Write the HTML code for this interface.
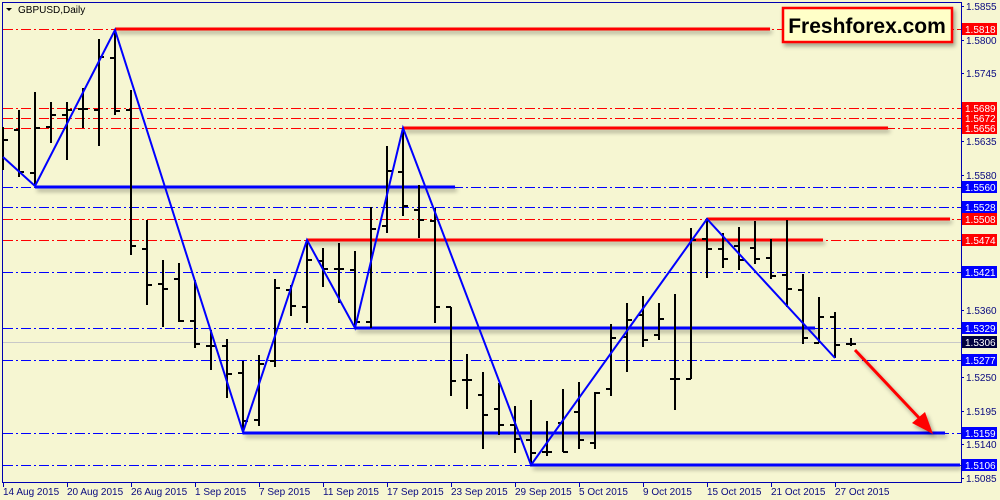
<!DOCTYPE html>
<html><head><meta charset="utf-8"><style>
html,body{margin:0;padding:0;background:#f6f6d2;}
svg{display:block;}
text{font-family:"Liberation Sans",sans-serif;font-size:10px;}
</style></head><body>
<svg width="1000" height="500" xmlns="http://www.w3.org/2000/svg">
<defs>
<filter id="sh" x="-5%" y="-50%" width="110%" height="300%"><feDropShadow dx="2" dy="3" stdDeviation="2" flood-color="#000" flood-opacity="0.35"/></filter>
</defs>
<rect width="1000" height="500" fill="#f6f6d2"/>
<path d="M2.5 2V482.5H961.5V2" fill="none" stroke="#0000b0" stroke-width="1"/>
<line x1="2" y1="2.5" x2="961" y2="2.5" stroke="#0000b0"/>
<line x1="3" y1="342.5" x2="961" y2="342.5" stroke="#c8c8c8"/>
<g stroke-width="1" stroke-dasharray="10,3,2,3" fill="none">
<g stroke="#ff0000">
<line x1="3" y1="29.5" x2="961" y2="29.5"/>
<line x1="3" y1="108.5" x2="961" y2="108.5"/>
<line x1="3" y1="118.5" x2="961" y2="118.5"/>
<line x1="3" y1="128.5" x2="961" y2="128.5"/>
<line x1="3" y1="219.5" x2="961" y2="219.5"/>
<line x1="3" y1="240.5" x2="961" y2="240.5"/>
</g>
<g stroke="#0000ff">
<line x1="3" y1="187.5" x2="961" y2="187.5"/>
<line x1="3" y1="207.5" x2="961" y2="207.5"/>
<line x1="3" y1="272.5" x2="961" y2="272.5"/>
<line x1="3" y1="328.5" x2="961" y2="328.5"/>
<line x1="3" y1="360.5" x2="961" y2="360.5"/>
<line x1="3" y1="433.5" x2="961" y2="433.5"/>
<line x1="3" y1="465.5" x2="961" y2="465.5"/>
</g>
</g>
<g stroke-width="3" filter="url(#sh)">
<line x1="115" y1="29" x2="770" y2="29" stroke="#ff0000"/>
<line x1="403" y1="128" x2="888" y2="128" stroke="#ff0000"/>
<line x1="707" y1="219" x2="950" y2="219" stroke="#ff0000"/>
<line x1="307" y1="240" x2="823" y2="240" stroke="#ff0000"/>
<line x1="35" y1="187" x2="455" y2="187" stroke="#0000ff"/>
<line x1="355" y1="328" x2="815" y2="328" stroke="#0000ff"/>
<line x1="243" y1="433" x2="945" y2="433" stroke="#0000ff"/>
<line x1="531" y1="465" x2="960" y2="465" stroke="#0000ff"/>
</g>
<path fill="none" stroke="#000" stroke-width="2" d="
M3 127V170M3 140H8
M19 110V177M14 130H19M19 172H24
M35 92V186M30 173H35M35 128H40
M51 102V143M46 127H51M51 115H56
M67 102V160M62 115H67M67 110H72
M83 88V128M78 109H83M83 109H88
M99 39V146M94 110H99M99 57H104
M115 30V115M110 58H115M115 111H120
M131 90V255M126 110H131M131 246H136
M147 220V305M142 249H147M147 285H152
M163 260V327M158 284H163M163 289H168
M179 263V322M174 279H179M179 321H184
M195 280V348M190 321H195M195 344H200
M211 330V370M206 346H211M211 346H216
M227 339V398M222 346H227M227 374H232
M243 361V430M238 373H243M243 421H248
M259 355V426M254 420H259M259 364H264
M275 279V367M270 361H275M275 288H280
M291 285V316M286 290H291M291 306H296
M307 240V323M302 307H307M307 260H312
M323 248V287M318 261H323M323 269H328
M339 243V303M334 269H339M339 269H344
M355 251V328M350 270H355M355 322H360
M371 207V328M366 322H371M371 229H376
M387 146V233M382 226H387M387 171H392
M403 128V216M398 172H403M403 206H408
M419 185V238M414 210H419M419 220H424
M435 208V323M430 221H435M435 307H440
M451 307V396M446 307H451M451 381H456
M467 354V409M462 380H467M467 380H472
M483 372V449M478 395H483M483 415H488
M499 383V435M494 409H499M499 425H504
M515 406V453M510 425H515M515 439H520
M531 400V466M526 440H531M531 453H536
M547 421V456M542 452H547M547 452H552
M563 389V452M558 423H563M563 452H568
M579 382V449M574 412H579M579 440H584
M595 392V449M590 443H595M595 393H600
M611 324V396M606 389H611M611 338H616
M627 303V372M622 337H627M627 320H632
M643 296V347M638 315H643M643 340H648
M659 303V340M654 335H659M659 319H664
M675 294V410M670 379H675M675 379H680
M691 228V379M686 379H691M691 240H696
M707 218V278M702 239H707M707 249H712
M723 233V268M718 249H723M723 259H728
M739 227V270M734 246H739M739 260H744
M755 221V264M750 248H755M755 259H760
M771 239V279M766 258H771M771 276H776
M787 220V307M782 275H787M787 289H792
M803 274V344M798 290H803M803 338H808
M819 297V343M814 343H819M819 317H824
M835 312V358M830 317H835M835 345H840
M851 338V346M846 344H851M851 344H856"/>
<polyline fill="none" stroke="#0000ff" stroke-width="2" points="3,157 35,186 115,30 243,432 307,240 355,328 403,128 531,465 707,219 835,358"/>
<g filter="url(#sh)">
<line x1="855" y1="350" x2="922" y2="421" stroke="#ff0000" stroke-width="3"/>
<polygon points="933,434 912,423 925,412" fill="#ff0000"/>
</g>
<rect x="783" y="8" width="169" height="34" fill="#ffffc8" stroke="#ff0000" stroke-width="2.5" filter="url(#sh)"/>
<text x="867" y="33" text-anchor="middle" style="font-size:21px;font-weight:bold" fill="#000">Freshforex.com</text>
<polygon points="6,8 12,8 9,11" fill="#000"/>
<text x="18" y="13" fill="#000">GBPUSD,Daily</text>
<g fill="#0a0a80">
<text x="966" y="10">1.5855</text>
<text x="966" y="44">1.5800</text>
<text x="966" y="77">1.5745</text>
<text x="966" y="145">1.5635</text>
<text x="966" y="179">1.5580</text>
<text x="966" y="314">1.5360</text>
<text x="966" y="381">1.5250</text>
<text x="966" y="415">1.5195</text>
<text x="966" y="448">1.5140</text>
<text x="966" y="482">1.5085</text>
</g>
<path stroke="#0000b0" d="M961 6.5H964M961 40.5H964M961 73.5H964M961 141.5H964M961 175.5H964M961 310.5H964M961 377.5H964M961 411.5H964M961 444.5H964M961 478.5H964"/>
<g>
<rect x="962" y="23" width="35" height="12" fill="#ff0000"/><text x="965" y="33" fill="#fff">1.5818</text>
<rect x="962" y="102" width="35" height="12" fill="#ff0000"/><text x="965" y="112" fill="#fff">1.5689</text>
<rect x="962" y="112" width="35" height="12" fill="#ff0000"/><text x="965" y="122" fill="#fff">1.5672</text>
<rect x="962" y="122" width="35" height="12" fill="#ff0000"/><text x="965" y="132" fill="#fff">1.5656</text>
<rect x="962" y="181" width="35" height="12" fill="#0000ff"/><text x="965" y="191" fill="#fff">1.5560</text>
<rect x="962" y="201" width="35" height="12" fill="#0000ff"/><text x="965" y="211" fill="#fff">1.5528</text>
<rect x="962" y="213" width="35" height="12" fill="#ff0000"/><text x="965" y="223" fill="#fff">1.5508</text>
<rect x="962" y="234" width="35" height="12" fill="#ff0000"/><text x="965" y="244" fill="#fff">1.5474</text>
<rect x="962" y="266" width="35" height="12" fill="#0000ff"/><text x="965" y="276" fill="#fff">1.5421</text>
<rect x="962" y="322" width="35" height="12" fill="#0000ff"/><text x="965" y="332" fill="#fff">1.5329</text>
<rect x="962" y="336" width="35" height="12" fill="#000040"/><text x="965" y="346" fill="#fff">1.5306</text>
<rect x="962" y="354" width="35" height="12" fill="#0000ff"/><text x="965" y="364" fill="#fff">1.5277</text>
<rect x="962" y="427" width="35" height="12" fill="#0000ff"/><text x="965" y="437" fill="#fff">1.5159</text>
<rect x="962" y="459" width="35" height="12" fill="#0000ff"/><text x="965" y="469" fill="#fff">1.5106</text>
</g>
<path stroke="#0000b0" d="M3.5 482V487M67.5 482V487M131.5 482V487M195.5 482V487M259.5 482V487M323.5 482V487M387.5 482V487M451.5 482V487M515.5 482V487M579.5 482V487M643.5 482V487M707.5 482V487M771.5 482V487M835.5 482V487"/>
<g fill="#0a0a80">
<text x="3" y="495">14 Aug 2015</text>
<text x="67" y="495">20 Aug 2015</text>
<text x="131" y="495">26 Aug 2015</text>
<text x="195" y="495">1 Sep 2015</text>
<text x="259" y="495">7 Sep 2015</text>
<text x="323" y="495">11 Sep 2015</text>
<text x="387" y="495">17 Sep 2015</text>
<text x="451" y="495">23 Sep 2015</text>
<text x="515" y="495">29 Sep 2015</text>
<text x="579" y="495">5 Oct 2015</text>
<text x="643" y="495">9 Oct 2015</text>
<text x="707" y="495">15 Oct 2015</text>
<text x="771" y="495">21 Oct 2015</text>
<text x="835" y="495">27 Oct 2015</text>
</g>
</svg>
</body></html>
